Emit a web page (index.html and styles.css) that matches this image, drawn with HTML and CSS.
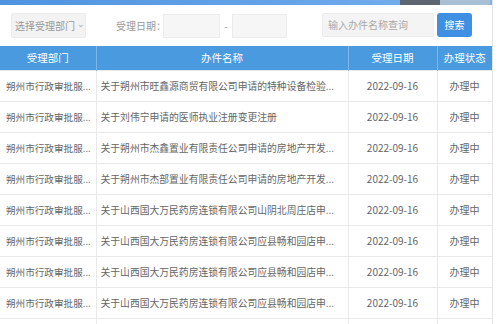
FILE: index.html
```html
<!DOCTYPE html>
<html lang="zh-CN">
<head>
<meta charset="utf-8">
<link rel="stylesheet" href="styles.css">
</head>
<body>
<div class="page">
  <div class="banner"><span class="b-dark"></span><span class="b-light"></span></div>
  <div class="filters">
    <div class="select">选择受理部门<span class="chev">⌄</span></div>
    <span class="label">受理日期：</span>
    <div class="date"></div>
    <span class="dash">-</span>
    <div class="date date2"></div>
    <div class="search">输入办件名称查询</div>
    <button class="btn">搜索</button>
  </div>
  <table class="grid">
    <colgroup><col class="c1"><col class="c2"><col class="c3"><col class="c4"></colgroup>
    <thead>
      <tr><th>受理部门</th><th>办件名称</th><th>受理日期</th><th>办理状态</th></tr>
    </thead>
    <tbody>
      <tr><td>朔州市行政审批服...</td><td class="name">关于朔州市旺鑫源商贸有限公司申请的特种设备检验...</td><td class="ctr">2022-09-16</td><td class="ctr">办理中</td></tr>
      <tr><td>朔州市行政审批服...</td><td class="name">关于刘伟宁申请的医师执业注册变更注册</td><td class="ctr">2022-09-16</td><td class="ctr">办理中</td></tr>
      <tr><td>朔州市行政审批服...</td><td class="name">关于朔州市杰鑫置业有限责任公司申请的房地产开发...</td><td class="ctr">2022-09-16</td><td class="ctr">办理中</td></tr>
      <tr><td>朔州市行政审批服...</td><td class="name">关于朔州市杰部置业有限责任公司申请的房地产开发...</td><td class="ctr">2022-09-16</td><td class="ctr">办理中</td></tr>
      <tr><td>朔州市行政审批服...</td><td class="name">关于山西国大万民药房连锁有限公司山阴北周庄店申...</td><td class="ctr">2022-09-16</td><td class="ctr">办理中</td></tr>
      <tr><td>朔州市行政审批服...</td><td class="name">关于山西国大万民药房连锁有限公司应县畅和园店申...</td><td class="ctr">2022-09-16</td><td class="ctr">办理中</td></tr>
      <tr><td>朔州市行政审批服...</td><td class="name">关于山西国大万民药房连锁有限公司应县畅和园店申...</td><td class="ctr">2022-09-16</td><td class="ctr">办理中</td></tr>
      <tr><td>朔州市行政审批服...</td><td class="name">关于山西国大万民药房连锁有限公司应县畅和园店申...</td><td class="ctr">2022-09-16</td><td class="ctr">办理中</td></tr>
      <tr><td></td><td class="name"></td><td class="ctr"></td><td class="ctr"></td></tr>
    </tbody>
  </table>
</div>
</body>
</html>
```
FILE: styles.css
```css
* { box-sizing: border-box; }
html, body { margin: 0; padding: 0; background: #fff; overflow: hidden; }
body {
  font-family: "Noto Sans CJK SC", "Noto Sans", sans-serif;
  font-size: 10px;
  color: #666;
}
.page {
  width: 493px;
  height: 324px;
  border-right: 1px solid #e4e4e4;
  overflow: hidden;
}
.banner {
  height: 5px;
  background: linear-gradient(90deg, #4f93df, #6aa7ea 70%, #7fb2ea);
  display: flex;
  padding-left: 400px;
}
.b-dark { width: 40px; background: #5d6570; }
.b-light { width: 50px; background: #a9bfd3; }
.filters {
  display: flex;
  align-items: center;
  height: 41px;
  padding: 0 0 0 11px;
}
.select {
  width: 75px;
  height: 25px;
  background: #f3f3f3;
  border: 1px solid #ececec;
  border-radius: 2px;
  color: #999;
  display: flex;
  align-items: center;
  padding-left: 3px;
  font-size: 10px;
  white-space: nowrap;
}
.chev { margin-left: 2px; font-size: 9px; color: #aaa; position: relative; top: -2px; }
.label { margin-left: 30px; color: #999; width: 47px; white-space: nowrap; }
.date {
  width: 57px;
  height: 24px;
  background: #f6f6f6;
  border: 1px solid #ececec;
}
.dash { width: 12px; text-align: center; color: #999; }
.date2 { width: 55px; }
.search {
  margin-left: 35px;
  width: 112px;
  height: 24px;
  background: #f4f4f4;
  border: 1px solid #ececec;
  border-radius: 2px;
  color: #aaa;
  display: flex;
  align-items: center;
  padding-left: 5px;
  margin-top: -2px;
}
.btn {
  margin-left: 3px;
  margin-top: -2px;
  width: 35px;
  height: 24px;
  border: 0;
  border-radius: 3px;
  background: #3f8fe2;
  color: #fff;
  font-family: inherit;
  font-size: 10px;
  padding: 0;
}
.grid {
  width: 492px;
  border-collapse: collapse;
  table-layout: fixed;
}
.c1 { width: 96px; }
.c2 { width: 252px; }
.c3 { width: 89px; }
.c4 { width: 55px; }
th {
  height: 24px;
  background: #4a9ae0;
  color: #fff;
  font-weight: normal;
  font-size: 10.5px;
  border-left: 1px solid #7db6ea;
  padding: 0;
}
th:first-child { border-left: 0; }
td {
  height: 31px;
  border: 1px solid #e9e9e9;
  padding: 0 2px 0 6px;
  white-space: nowrap;
  overflow: hidden;
  font-size: 9.6px;
}
td:first-child { border-left: 0; }
td.name { padding-left: 4px; font-size: 9.8px; }
td.ctr { text-align: center; padding: 0 2px; font-size: 10px; }
```
